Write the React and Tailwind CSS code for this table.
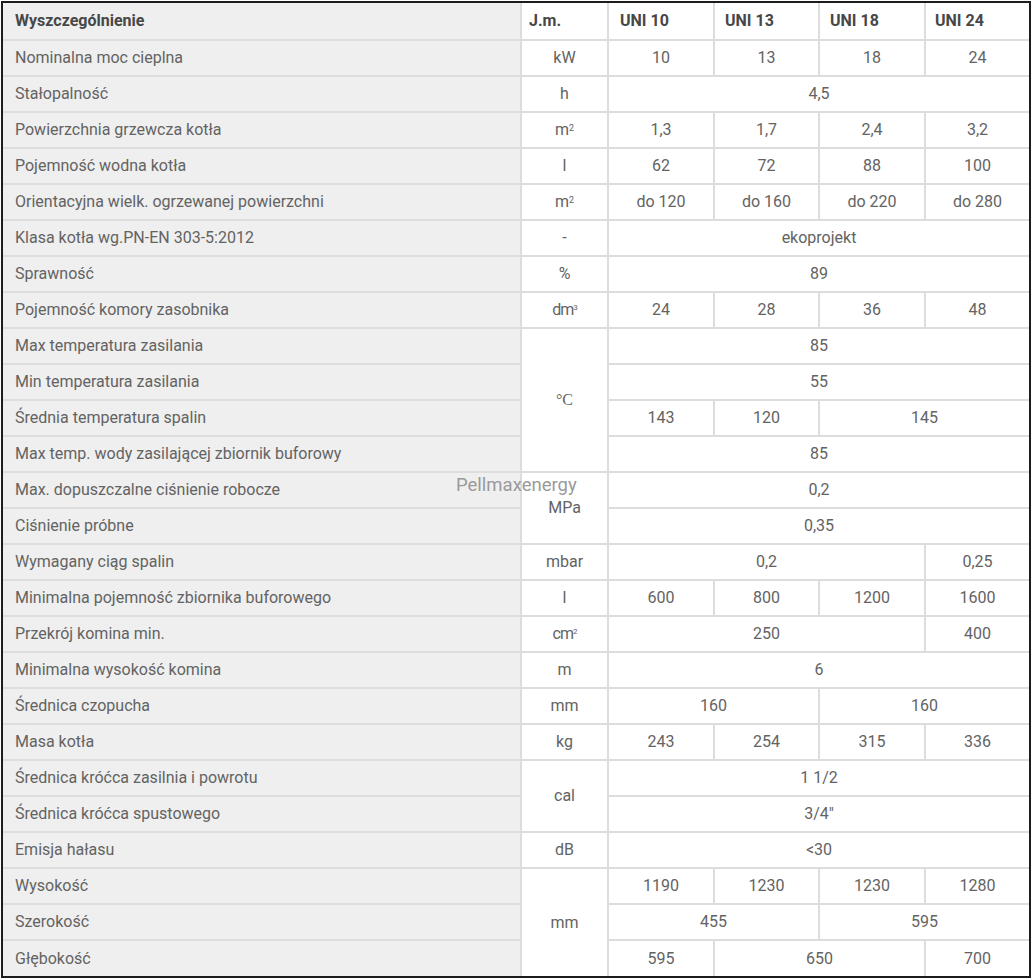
import React from "react";

const rows = [
  { name: "Nominalna moc cieplna", unit: "kW", vals: [["10"], ["13"], ["18"], ["24"]] },
  { name: "Stałopalność", unit: "h", vals: [["4,5", 4]] },
  { name: "Powierzchnia grzewcza kotła", unit: "m2", vals: [["1,3"], ["1,7"], ["2,4"], ["3,2"]] },
  { name: "Pojemność wodna kotła", unit: "l", vals: [["62"], ["72"], ["88"], ["100"]] },
  { name: "Orientacyjna wielk. ogrzewanej powierzchni", unit: "m2", vals: [["do 120"], ["do 160"], ["do 220"], ["do 280"]] },
  { name: "Klasa kotła wg.PN-EN 303-5:2012", unit: "-", vals: [["ekoprojekt", 4]] },
  { name: "Sprawność", unit: "%", vals: [["89", 4]] },
  { name: "Pojemność komory zasobnika", unit: "dm3", vals: [["24"], ["28"], ["36"], ["48"]] },
  { name: "Max temperatura zasilania", unit: "C", span: 4, vals: [["85", 4]] },
  { name: "Min temperatura zasilania", vals: [["55", 4]] },
  { name: "Średnia temperatura spalin", vals: [["143"], ["120"], ["145", 2]] },
  { name: "Max temp. wody zasilającej zbiornik buforowy", vals: [["85", 4]] },
  { name: "Max. dopuszczalne ciśnienie robocze", unit: "MPa", span: 2, vals: [["0,2", 4]] },
  { name: "Ciśnienie próbne", vals: [["0,35", 4]] },
  { name: "Wymagany ciąg spalin", unit: "mbar", vals: [["0,2", 3], ["0,25"]] },
  { name: "Minimalna pojemność zbiornika buforowego", unit: "l", vals: [["600"], ["800"], ["1200"], ["1600"]] },
  { name: "Przekrój komina min.", unit: "cm2", vals: [["250", 3], ["400"]] },
  { name: "Minimalna wysokość komina", unit: "m", vals: [["6", 4]] },
  { name: "Średnica czopucha", unit: "mm", vals: [["160", 2], ["160", 2]] },
  { name: "Masa kotła", unit: "kg", vals: [["243"], ["254"], ["315"], ["336"]] },
  { name: "Średnica króćca zasilnia i powrotu", unit: "cal", span: 2, vals: [["1 1/2", 4]] },
  { name: "Średnica króćca spustowego", vals: [["3/4″", 4]] },
  { name: "Emisja hałasu", unit: "dB", vals: [["<30", 4]] },
  { name: "Wysokość", unit: "mm", span: 3, vals: [["1190"], ["1230"], ["1230"], ["1280"]] },
  { name: "Szerokość", vals: [["455", 2], ["595", 2]] },
  { name: "Głębokość", vals: [["595"], ["650", 2], ["700"]] },
];

// units with small raised digits, drawn as text
const Unit = ({ u }) => {
  if (u === "m2")
    return (
      <span>
        m<sup className="text-[9px] relative -top-[4px]">2</sup>
      </span>
    );
  if (u === "dm3")
    return (
      <span className="tracking-[-1px]">
        dm<sup className="text-[8px] relative -top-[5px]">3</sup>
      </span>
    );
  if (u === "cm2")
    return (
      <span className="tracking-[-1px]">
        cm<sup className="text-[8px] relative -top-[5px]">2</sup>
      </span>
    );
  if (u === "C")
    return <span className="font-['Liberation_Serif',serif] text-[16px]">°C</span>;
  return <span>{u}</span>;
};

const cell = "border-2 border-[#dddddd] h-[36px] p-0";
const head = "border-2 border-[#dddddd] h-[37px] p-0 text-left";

const App = () => {
  return (
    <div className="bg-white w-[1034px] h-[980px] pt-px pl-px font-['Roboto',sans-serif]">
      <div className="relative w-[1030px] border-2 border-[#1c1c1c]">
        <table className="w-full border-collapse border-hidden table-fixed text-[16px] text-[#636363]">
          <colgroup>
            <col className="w-[518px]" />
            <col className="w-[87px]" />
            <col className="w-[106px]" />
            <col className="w-[105px]" />
            <col className="w-[106px]" />
            <col />
          </colgroup>
          <thead>
            <tr className="font-bold text-[#474747]">
              <th className={`${head} bg-[#efefef] pl-3`}>Wyszczególnienie</th>
              <th className={`${head} pl-[7px]`}>J.m.</th>
              <th className={`${head} pl-[11px]`}>UNI 10</th>
              <th className={`${head} pl-[10px]`}>UNI 13</th>
              <th className={`${head} pl-[10px]`}>UNI 18</th>
              <th className={`${head} pl-[9px]`}>UNI 24</th>
            </tr>
          </thead>
          <tbody>
            {rows.map((r) => (
              <tr key={r.name}>
                <td className={`${cell} bg-[#efefef] text-left pl-3`}>{r.name}</td>
                {r.unit && (
                  <td className={`${cell} text-center`} rowSpan={r.span || 1}>
                    <Unit u={r.unit} />
                  </td>
                )}
                {r.vals.map(([v, s], i) => (
                  <td key={i} className={`${cell} text-center`} colSpan={s || 1}>
                    {v}
                  </td>
                ))}
              </tr>
            ))}
          </tbody>
        </table>
        <div className="absolute left-[453px] top-[471px] text-[18.5px] leading-[22px] text-[#9a9a9a] pointer-events-none">
          Pellmaxenergy
        </div>
      </div>
    </div>
  );
};

export default App;
